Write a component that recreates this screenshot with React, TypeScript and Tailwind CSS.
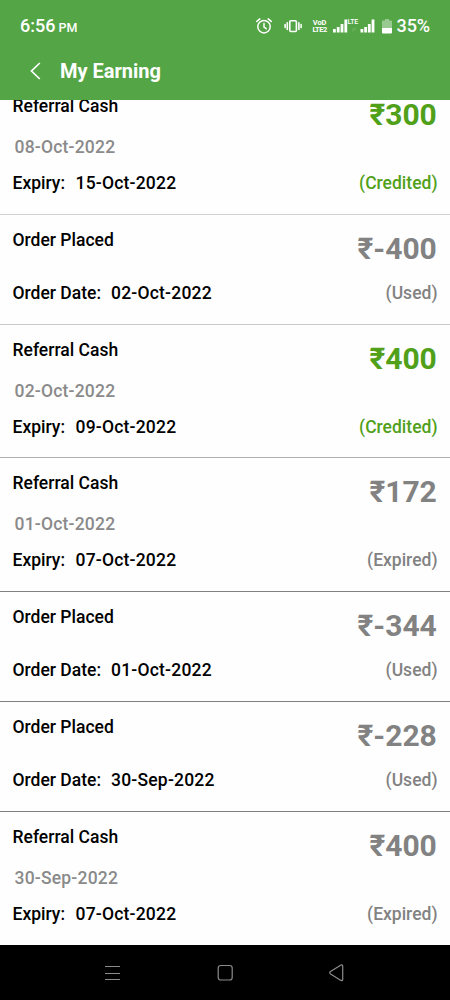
type Entry = {
    title: string;
    date?: string;
    label: string;
    labelDate: string;
    amount: string;
    status: string;
    box: string;
};

const entries: Entry[] = [
    { title: 'Referral Cash', date: '08-Oct-2022', label: 'Expiry:', labelDate: '15-Oct-2022', amount: '₹300', status: 'Credited', box: 'h-[134px] border-[#d2d2d2]' },
    { title: 'Order Placed', label: 'Order Date:', labelDate: '02-Oct-2022', amount: '₹-400', status: 'Used', box: 'h-[110px] border-[#cacaca]' },
    { title: 'Referral Cash', date: '02-Oct-2022', label: 'Expiry:', labelDate: '09-Oct-2022', amount: '₹400', status: 'Credited', box: 'h-[133px] border-[#b0b0b0]' },
    { title: 'Referral Cash', date: '01-Oct-2022', label: 'Expiry:', labelDate: '07-Oct-2022', amount: '₹172', status: 'Expired', box: 'h-[134px] border-[#808080]' },
    { title: 'Order Placed', label: 'Order Date:', labelDate: '01-Oct-2022', amount: '₹-344', status: 'Used', box: 'h-[110px] border-[#808080]' },
    { title: 'Order Placed', label: 'Order Date:', labelDate: '30-Sep-2022', amount: '₹-228', status: 'Used', box: 'h-[110px] border-[#808080]' },
    { title: 'Referral Cash', date: '30-Sep-2022', label: 'Expiry:', labelDate: '07-Oct-2022', amount: '₹400', status: 'Expired', box: 'h-[134px] border-[#808080]' },
];

function StatusIcons() {
    return (
        <div className="flex items-center">
            {/* alarm */}
            <svg width="18" height="18" viewBox="0 0 18 18" fill="none" stroke="white" strokeWidth="1.5" strokeLinecap="round">
                <circle cx="9" cy="9.7" r="6.2" />
                <path d="M9 6.5v3.6l2.2 1.6M1.8 4.4l3-2.5M16.2 4.4l-3-2.5" />
            </svg>
            {/* vibrate */}
            <svg className="ml-[10px]" width="20" height="18" viewBox="0 0 20 18" fill="none" stroke="white" strokeWidth="1.6" strokeLinecap="round">
                <rect x="6.8" y="3.7" width="6.6" height="10.8" rx="1" />
                <path d="M4.3 5.8v6.6M2.1 7.6v3M15.9 5.8v6.6M18.1 7.6v3" />
            </svg>
            <div className="ml-[10px] flex w-[14px] flex-col items-center text-[7.5px] leading-[7px] font-bold">
                <div>VoD</div>
                <div className="tracking-[-0.5px]">LTE2</div>
            </div>
            {/* signal, sim 1 */}
            <svg className="ml-[6px]" width="15" height="16" viewBox="0 0 15 16" fill="white">
                <path d="M0 11h2.8v3.5H0zM3.8 9h2.8v5.5H3.8zM7.6 6h2.8v8.5H7.6zM11.4 1.5h2.8v13h-2.8z" />
            </svg>
            <div className="h-[14px] w-[12px] text-[7px] leading-[7px] font-medium tracking-[-0.3px]">
                <div>LTE</div>
                <div className="text-center text-[5px] leading-[7px] opacity-40">↓↑</div>
            </div>
            {/* signal, sim 2 */}
            <svg width="15" height="16" viewBox="0 0 15 16" fill="white">
                <path d="M.5 11h2.8v3.5H.5zM4.2 9h2.8v5.5H4.2zM7.9 6h2.8v8.5H7.9zM11.6 1.5h2.8v13h-2.8z" />
            </svg>
            {/* battery */}
            <svg className="ml-[7px]" width="10" height="16" viewBox="0 0 10 16" fill="white">
                <path opacity=".4" d="M3 1h4v1.5h2q1 0 1 1V10H0V3.5q0-1 1-1h2z" />
                <path d="M0 10h10v4.5q0 1-1 1H1q-1 0-1-1z" />
            </svg>
            <span className="ml-[5px] text-[18px] tracking-[-0.1px]">35%</span>
        </div>
    );
}

function EntryRow({ entry }: { entry: Entry }) {
    const color = entry.status === 'Credited' ? 'text-[#51a01a]' : 'text-[#828282]';

    return (
        <div className={`flex shrink-0 justify-between border-b pt-[15px] pr-[12.5px] pl-[12.5px] ${entry.box}`}>
            <div className="flex flex-col">
                <div>{entry.title}</div>
                {entry.date && <div className="mt-[21px] ml-[2px] tracking-[0.2px] text-[#8a8a8a]">{entry.date}</div>}
                <div className={`flex ${entry.date ? 'mt-4 gap-[10.5px]' : 'mt-[33px] gap-[10px]'}`}>
                    <span>{entry.label}</span>
                    <span className="tracking-[0.2px]">{entry.labelDate}</span>
                </div>
            </div>
            <div className={`flex flex-col items-end ${color}`}>
                <div className="mt-[1px] mr-[0.7px] text-[30px] leading-[36px] font-bold">{entry.amount}</div>
                <div className={entry.date ? 'mt-10' : 'mt-4'}>({entry.status})</div>
            </div>
        </div>
    );
}

function App() {
    return (
        <div className="flex h-[1000px] w-[450px] flex-col overflow-hidden bg-[#fefefe] font-['Roboto',sans-serif] text-[17.5px] leading-[20px] font-medium text-black">
            {/* header */}
            <div className="z-10 h-[100px] shrink-0 bg-[#54a546] text-white">
                <div className="flex h-[52px] items-center justify-between pr-[20px] pl-[20px]">
                    <div className="pt-[2px] text-[18px]">
                        6:56 <span className="-ml-[1.5px] text-[12.5px]">PM</span>
                    </div>
                    <StatusIcons />
                </div>
                <div className="flex h-[38px] items-center pl-[30px]">
                    <svg width="11" height="18" viewBox="0 0 11 18" fill="none" stroke="white" strokeWidth="1.7">
                        <path d="M9.8 1L1.5 9l8.3 8" />
                    </svg>
                    <h1 className="ml-[19px] text-[20px] font-bold">My Earning</h1>
                </div>
            </div>

            {/* earnings list, scrolled a little under the header */}
            <div className="-mt-[19px] flex h-[864px] shrink-0 flex-col overflow-hidden">
                {entries.map((entry, i) => (
                    <EntryRow key={i} entry={entry} />
                ))}
            </div>

            {/* navigation bar */}
            <div className="z-10 flex h-[55px] shrink-0 items-center justify-between bg-black px-[104px]">
                <svg width="17" height="18" viewBox="0 0 17 18" fill="none" stroke="#8c8c8c" strokeWidth="1">
                    <path d="M1 2.5h15M1 9.5h15M1 15.5h15" />
                </svg>
                <svg width="17" height="18" viewBox="0 0 17 18" fill="none" stroke="#8c8c8c" strokeWidth="1.2">
                    <rect x="1.2" y="1.5" width="14" height="14.5" rx="2.5" />
                </svg>
                <svg className="-ml-px mr-px" width="17" height="18" viewBox="0 0 17 18" fill="none" stroke="#8c8c8c" strokeWidth="1.2" strokeLinejoin="round">
                    <path d="M13 1.1L2.5 7.6q-1.6 1.2 0 2.4L13 16.400q1.7.6 1.7-1V2.200q0-1.7-1.7-1.100z" />
                </svg>
            </div>
        </div>
    );
}

export default App;
